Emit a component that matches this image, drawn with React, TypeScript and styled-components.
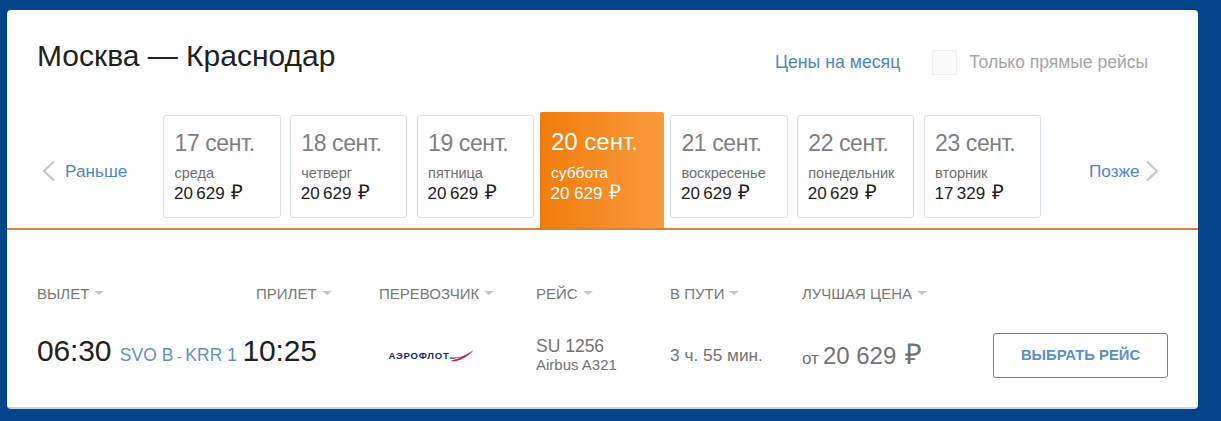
import React from "react";
import styled, { createGlobalStyle } from "styled-components";

const Global = createGlobalStyle`
  html, body { margin: 0; padding: 0; background: #03458a; }
  body { font-family: "Liberation Sans", Arial, sans-serif; }
`;

const Page = styled.div`
  width: 1221px;
  height: 421px;
  box-sizing: border-box;
  padding: 10px 23px 12px 7px;
  overflow: hidden;
`;

const Card = styled.section`
  height: 399px;
  box-sizing: border-box;
  background: #fff;
  border-radius: 4px;
  border-bottom: 2px solid #c9d8e2;
`;

const Header = styled.header`
  height: 102px;
  box-sizing: border-box;
  padding: 26px 50px 0 30px;
  display: flex;
  align-items: flex-start;
`;

const Title = styled.h1`
  margin: 0;
  font-size: 30px;
  line-height: 40px;
  font-weight: 400;
  color: #212121;
  flex: 1;
`;

const MonthLink = styled.a`
  font-size: 17.7px;
  line-height: 20px;
  margin-top: 16px;
  color: #4f86c6;
`;

const Check = styled.span`
  width: 25px;
  height: 25px;
  box-sizing: border-box;
  margin: 14px 12px 0 32px;
  background: #fbfbfb;
  border: 1px solid #efefef;
`;

const CheckLabel = styled.span`
  font-size: 17.5px;
  line-height: 20px;
  margin-top: 16px;
  color: #a6a6a6;
`;

const Strip = styled.div`
  height: 118px;
  box-sizing: border-box;
  border-bottom: 2px solid #dd8130;
  display: flex;
  align-items: flex-start;
`;

const Nav = styled.a<{ $side: "prev" | "next" }>`
  display: flex;
  align-items: center;
  margin-top: 47px;
  height: 24px;
  font-size: 17.2px;
  color: #4f86c6;
  gap: ${(p) => (p.$side === "prev" ? "9px" : "5px")};
  width: ${(p) => (p.$side === "prev" ? "156px" : "auto")};
  margin-left: ${(p) => (p.$side === "prev" ? "0" : "47.8px")};
  padding-left: ${(p) => (p.$side === "prev" ? "35px" : "0")};
  box-sizing: border-box;
`;

const Days = styled.div`
  display: flex;
  gap: 9.2px;
`;

const Day = styled.div<{ $active?: boolean }>`
  box-sizing: border-box;
  width: ${(p) => (p.$active ? "124px" : "117.6px")};
  height: ${(p) => (p.$active ? "116px" : "103px")};
  margin: ${(p) => (p.$active ? "0 -3.2px 0 -3.4px" : "3px 0 0")};
  padding: ${(p) => (p.$active ? "16px 11px 0" : "13px 10.5px 0")};
  border-radius: ${(p) => (p.$active ? "2px 2px 0 0" : "3px")};
  border: ${(p) => (p.$active ? "none" : "1px solid #d8e0e8")};
  background: ${(p) =>
    p.$active ? "linear-gradient(90deg, #f27d0c, #f99a3e)" : "#fff"};
  color: ${(p) => (p.$active ? "#fff" : "#222")};
`;

const DayDate = styled.div<{ $active?: boolean }>`
  font-size: ${(p) => (p.$active ? "24px" : "23px")};
  line-height: 28px;
  letter-spacing: ${(p) => (p.$active ? "0" : "-0.4px")};
  white-space: nowrap;
  color: ${(p) => (p.$active ? "#fff" : "#808080")};
`;

const Weekday = styled.div<{ $active?: boolean }>`
  margin-top: 8px;
  font-size: ${(p) => (p.$active ? "15.5px" : "14.5px")};
  line-height: 17px;
  color: ${(p) => (p.$active ? "#fff" : "#707070")};
`;

const DayPrice = styled.div<{ $active?: boolean }>`
  margin-top: ${(p) => (p.$active ? "1px" : "0")};
  margin-left: -0.5px;
  font-size: 17px;
  line-height: 19px;
  white-space: nowrap;
`;

const Ruble = styled.span`
  display: inline-block;
  font-size: 1.2em;
  margin-left: 2px;
  line-height: 1;
`;

const Columns = styled.div`
  display: grid;
  grid-template-columns: 219px 123px 157px 134px 132px auto;
  padding: 53px 0 0 30px;
`;

const ColHead = styled.div`
  display: flex;
  align-items: center;
  gap: 5px;
  height: 20px;
  font-size: 15px;
  color: #787878;
  text-transform: uppercase;
  white-space: nowrap;
`;

const Caret = styled.span`
  width: 0;
  height: 0;
  border-left: 5px solid transparent;
  border-right: 5px solid transparent;
  border-top: 4px solid #c6c6c6;
`;

const Row = styled.div`
  display: grid;
  grid-template-columns: 205.5px 135.5px 158px 134px 132px 191px 175px;
  align-items: center;
  height: 46px;
  margin-top: 29px;
  padding-left: 30px;
`;

const Depart = styled.div`
  display: flex;
  align-items: baseline;
  white-space: nowrap;
  margin-top: -8px;
`;

const Time = styled.span`
  font-size: 30px;
  line-height: 36px;
  letter-spacing: -0.15px;
  color: #212121;
`;

const Arrive = styled(Time)`
  margin-top: -8px;
`;

const Airports = styled.span`
  margin-left: 8.5px;
  font-size: 17.5px;
  color: #5f91c9;
`;

const Dash = styled.span`
  font-size: 12px;
  margin: 0 4px;
`;

const Logo = styled.div`
  display: flex;
  align-items: center;
  margin-left: 10.5px;
`;

const LogoText = styled.span`
  font-size: 9.5px;
  font-weight: 700;
  letter-spacing: 0.8px;
  color: #14296b;
  white-space: nowrap;
`;

const Flight = styled.div`
  color: #737373;
`;

const FlightNo = styled.div`
  font-size: 17.5px;
  line-height: 20px;
`;

const Plane = styled.div`
  font-size: 15px;
  line-height: 18px;
`;

const Duration = styled.div`
  font-size: 17.3px;
  color: #737373;
  white-space: nowrap;
`;

const Price = styled.div`
  font-size: 17px;
  color: #737373;
  white-space: nowrap;
`;

const Amount = styled.span`
  font-size: 24px;
  margin-left: 4px;
`;

const Select = styled.button`
  width: 175px;
  height: 45px;
  background: #fff;
  border: 1px solid #4f8cc4;
  border-radius: 3px;
  font-family: inherit;
  font-size: 14.8px;
  font-weight: 700;
  color: #5b8fca;
  text-transform: uppercase;
`;

const days = [
  { date: "17 сент.", wd: "среда", price: "20\u2009629" },
  { date: "18 сент.", wd: "четверг", price: "20\u2009629" },
  { date: "19 сент.", wd: "пятница", price: "20\u2009629" },
  { date: "20 сент.", wd: "суббота", price: "20 629", active: true },
  { date: "21 сент.", wd: "воскресенье", price: "20\u2009629" },
  { date: "22 сент.", wd: "понедельник", price: "20\u2009629" },
  { date: "23 сент.", wd: "вторник", price: "17\u2009329" },
];

const heads = ["Вылет", "Прилет", "Перевозчик", "Рейс", "В пути", "Лучшая цена"];

const Chevron = ({ flip }: { flip?: boolean }) => (
  <svg width="14" height="22" viewBox="0 0 14 22" fill="none">
    <path
      d={flip ? "M2 1.5 L12 11 L2 20.5" : "M12 1.5 L2 11 L12 20.5"}
      stroke="#c8c8c8"
      strokeWidth="2.4"
    />
  </svg>
);

const Wing = () => (
  <svg width="24" height="14" viewBox="0 0 24 14">
    <path d="M1 12.5 C9 11 17 7 23.5 2 C19 8 11 12.5 3 13.5 Z" fill="#c3243f" />
    <path d="M0 9.5 H7 C12 9 16 7 20 4 C15 8.5 9 10.8 0 10.8 Z" fill="#2b3f8c" />
  </svg>
);

export default function App() {
  return (
    <Page>
      <Global />
      <Card>
        <Header>
          <Title>Москва — Краснодар</Title>
          <MonthLink>Цены на месяц</MonthLink>
          <Check />
          <CheckLabel>Только прямые рейсы</CheckLabel>
        </Header>
        <Strip>
          <Nav $side="prev">
            <Chevron />
            Раньше
          </Nav>
          <Days>
            {days.map((d) => (
              <Day key={d.date} $active={d.active}>
                <DayDate $active={d.active}>{d.date}</DayDate>
                <Weekday $active={d.active}>{d.wd}</Weekday>
                <DayPrice $active={d.active}>
                  {d.price} <Ruble>₽</Ruble>
                </DayPrice>
              </Day>
            ))}
          </Days>
          <Nav $side="next">
            Позже
            <Chevron flip />
          </Nav>
        </Strip>
        <Columns>
          {heads.map((h) => (
            <ColHead key={h}>
              {h}
              <Caret />
            </ColHead>
          ))}
        </Columns>
        <Row>
          <Depart>
            <Time>06:30</Time>
            <Airports>
              SVO B<Dash>-</Dash>KRR 1
            </Airports>
          </Depart>
          <Arrive>10:25</Arrive>
          <Logo>
            <LogoText>АЭРОФЛОТ</LogoText>
            <Wing />
          </Logo>
          <Flight>
            <FlightNo>SU 1256</FlightNo>
            <Plane>Airbus A321</Plane>
          </Flight>
          <Duration>3 ч. 55 мин.</Duration>
          <Price>
            от
            <Amount>
              20 629 <Ruble>₽</Ruble>
            </Amount>
          </Price>
          <Select>Выбрать рейс</Select>
        </Row>
      </Card>
    </Page>
  );
}
